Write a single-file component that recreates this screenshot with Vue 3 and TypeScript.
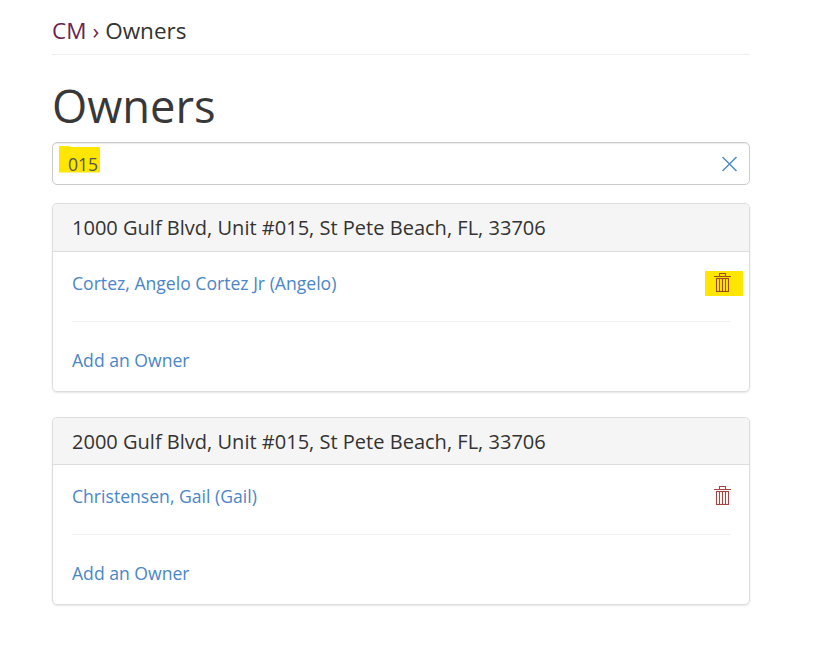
<script setup lang="ts">
interface Unit {
  address: string
  owner: string
  highlight: boolean
}

const units: Unit[] = [
  { address: '1000 Gulf Blvd, Unit #015, St Pete Beach, FL, 33706', owner: 'Cortez, Angelo Cortez Jr (Angelo)', highlight: true },
  { address: '2000 Gulf Blvd, Unit #015, St Pete Beach, FL, 33706', owner: 'Christensen, Gail (Gail)', highlight: false },
]
</script>

<template>
  <div class="page">
    <nav class="crumbs">
      <a class="crumb-root">CM</a>
      <span class="crumb-sep">›</span>
      <span>Owners</span>
    </nav>
    <h1>Owners</h1>
    <div class="search">
      <span class="search-value">015</span>
      <svg class="clear" width="18" height="18" viewBox="0 0 18 18" fill="none" stroke="currentColor" stroke-width="1.4">
        <path d="M2.5 2l14 14M16.5 2l-14 14" />
      </svg>
    </div>
    <section v-for="unit in units" :key="unit.address" class="card">
      <header class="card-head">{{ unit.address }}</header>
      <div class="card-body">
        <div class="owner-row">
          <a class="link">{{ unit.owner }}</a>
          <span class="trash" :class="{ marked: unit.highlight }">
            <svg width="17" height="20" viewBox="0 0 17 20" fill="none" stroke="currentColor" stroke-width="1.1">
              <path d="M0 4.5h17M5.5 4.5V1.5h6v3" />
              <rect x="2.5" y="6.5" width="12" height="13" />
              <path d="M5.5 7v12M8.5 7v12M11.5 7v12" />
            </svg>
          </span>
        </div>
        <a class="link add">Add an Owner</a>
      </div>
    </section>
  </div>
</template>

<style scoped>
.page {
  width: 698px;
  margin-left: 52px;
  padding-top: 14px;
  font-family: "Open Sans", sans-serif;
  color: #333;
}

.crumbs {
  display: flex;
  gap: 6px;
  height: 40px;
  font-size: 22.5px;
  line-height: 33px;
  border-bottom: 1px solid #eee;
  color: #333;
}

.crumb-root {
  color: #6a2350;
}

.crumb-sep {
  color: #6a2350;
}

h1 {
  margin: 19px 0 4px;
  font-size: 45.3px;
  font-weight: 400;
  line-height: 64px;
  color: #383838;
}

.search {
  display: flex;
  align-items: center;
  justify-content: space-between;
  height: 43px;
  box-sizing: border-box;
  padding: 0 11px 0 15px;
  border: 1px solid #ccc;
  border-radius: 5px;
  box-shadow: inset 0 1px 1px rgba(0, 0, 0, 0.08);
  font-size: 17.6px;
}

.search-value {
  position: relative;
  z-index: 0;
  color: #555;
}

/* marker stroke drawn over the typed value */
.search-value::before {
  content: "";
  position: absolute;
  z-index: -1;
  left: -9px;
  right: -2px;
  top: -6px;
  bottom: 3px;
  background: #ffe600;
  clip-path: polygon(0 0, 20% 0, 30% 6%, 100% 6%, 100% 100%, 0 100%);
}

.clear {
  color: #4a88d0;
}

.card {
  margin-top: 18.45px;
  margin-bottom: 24.9px;
  border: 1px solid #ddd;
  border-radius: 5px;
  box-shadow: 0 1px 2px rgba(0, 0, 0, 0.1);
}

.card + .card {
  margin-top: 0;
}

.card-head {
  height: 46.5px;
  padding-left: 19px;
  font-size: 20.05px;
  line-height: 48px;
  background: #f5f5f5;
  border-bottom: 1px solid #ddd;
  border-radius: 5px 5px 0 0;
}

.card-body {
  padding: 0 19px;
}

.owner-row {
  display: flex;
  align-items: center;
  justify-content: space-between;
  height: 62.7px;
  padding-bottom: 6px;
  border-bottom: 1px solid #eee;
}

.link {
  font-size: 17.6px;
  color: #4a86c8;
}

.add {
  display: block;
  height: 69px;
  line-height: 76px;
}

.trash {
  display: flex;
  justify-content: center;
  width: 38px;
  height: 25px;
  padding: 1px 3px 0 0;
  box-sizing: border-box;
  margin-right: -13px;
  color: #a94442;
}

.trash.marked {
  background: #ffe600;
  color: #a04a10;
}
</style>
